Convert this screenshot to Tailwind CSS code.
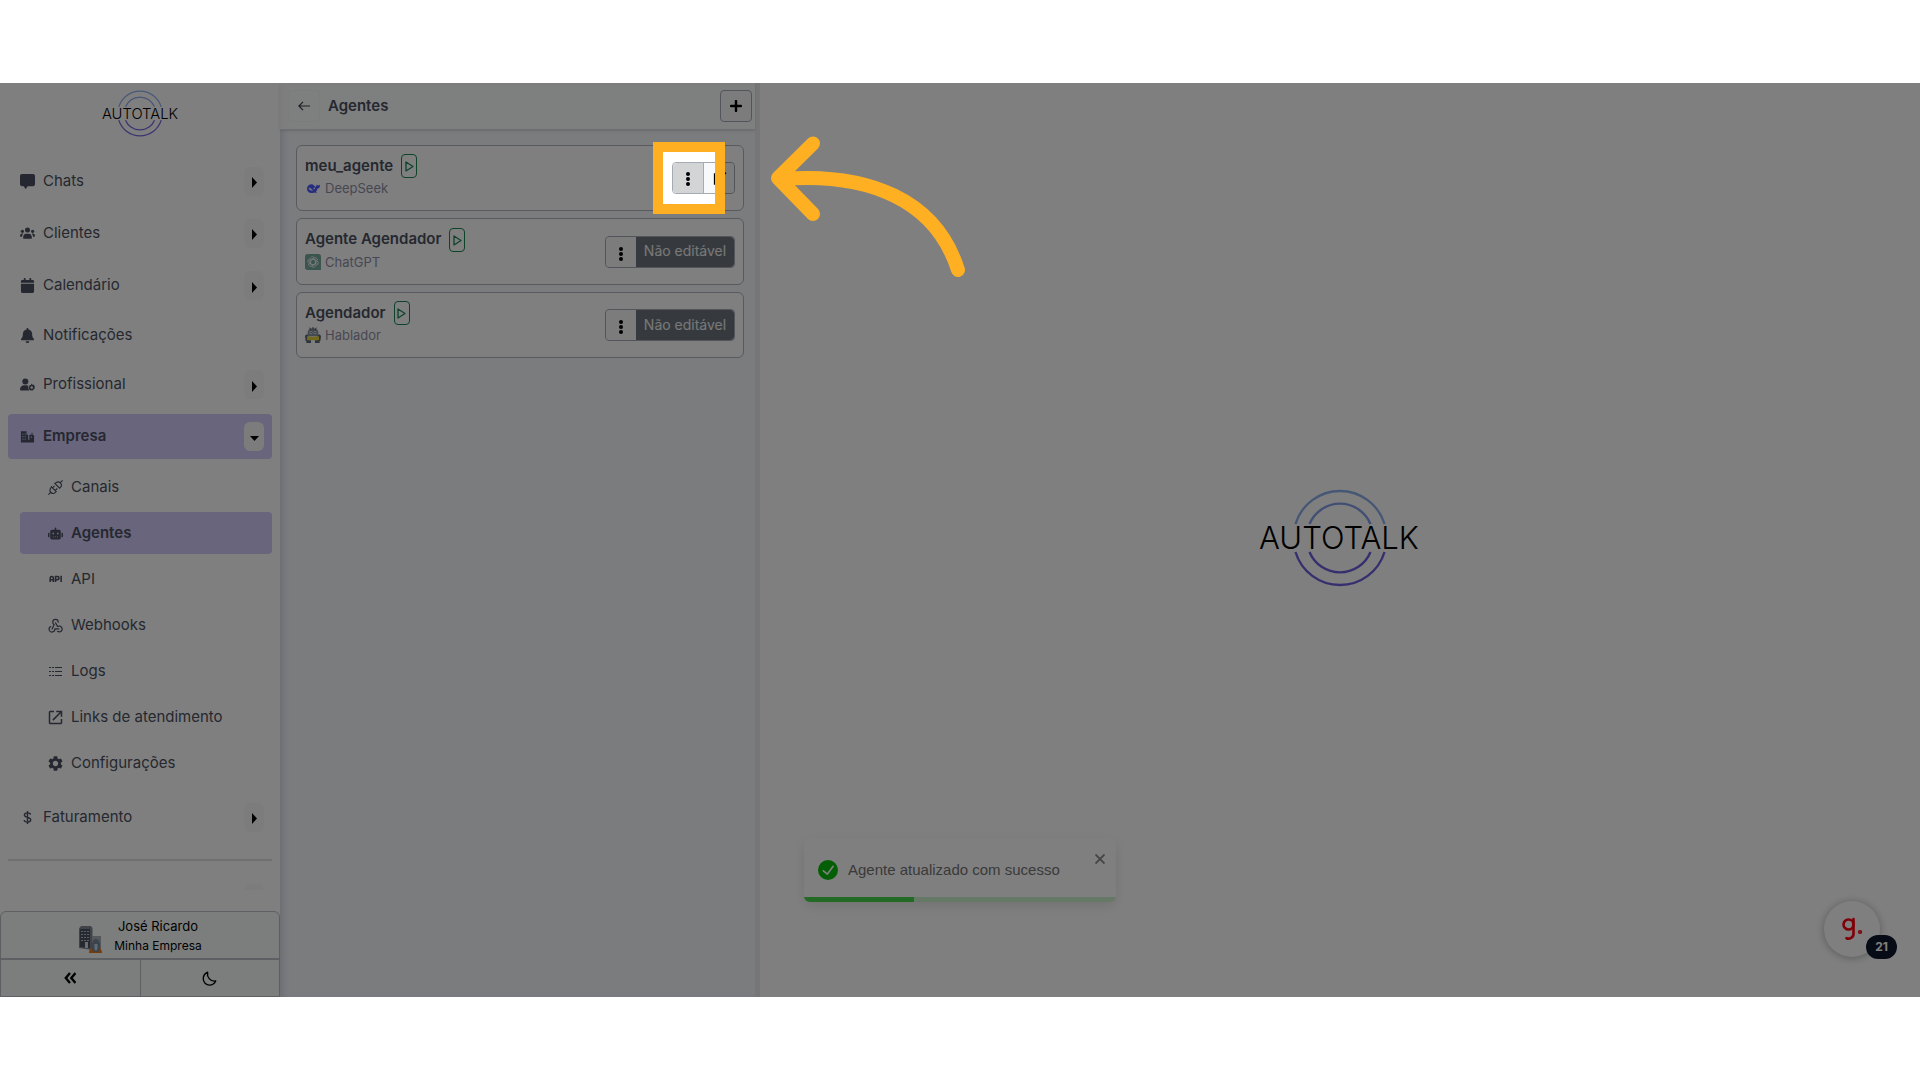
<!DOCTYPE html>
<html lang="pt-BR">
<head>
    <meta charset="UTF-8">
    <meta name="viewport" content="width=device-width, initial-scale=1.0">
    <title>Autotalk - Agentes</title>
    <script src="https://cdn.jsdelivr.net/npm/@tailwindcss/browser@4"></script>
</head>
<body class="bg-white font-['Inter','Roboto',sans-serif] text-[15px] text-[#4b5160]">
    <div class="h-screen py-[83px]">
        <div class="relative flex h-full overflow-hidden bg-white">

            <!-- Sidebar -->
            <aside class="flex w-[280px] shrink-0 flex-col bg-white shadow-[2px_0_6px_2px_#d9d9e6]">
                <a href="#" class="flex h-[76px] shrink-0 justify-center pt-1" aria-label="Autotalk">
                    <svg class="h-[53px] w-20" viewBox="0 0 168 110">
                        <g fill="none" stroke-width="2.6">
                            <path d="M39.500 41A46.500 46.500 0 0 1 128.500 41" stroke="#8fb0f0"/>
                            <path d="M53.500 41A33 33 0 0 1 114.500 41" stroke="#8fa8f0"/>
                            <path d="M39.500 69A46.500 46.500 0 0 0 128.500 69" stroke="#7466e0"/>
                            <path d="M53.500 69A33 33 0 0 0 114.500 69" stroke="#7466e0"/>
                        </g>
                        <text x="84" y="66" text-anchor="middle" class="fill-black font-['Inter'] text-[31px] font-light">AUTOTALK</text>
                    </svg>
                </a>

                <nav class="mb-[21px] flex min-h-0 flex-1 flex-col gap-[7px] overflow-hidden px-2">
                    <div class="flex h-[45px] shrink-0 items-center rounded pr-2 pl-3">
                        <a href="#" class="flex flex-1 items-center gap-2">
                            <svg class="size-[15px]" viewBox="0 0 512 512" fill="currentColor"><path d="M64 0C28.700 0 0 28.700 0 64V352c0 35.300 28.700 64 64 64h64l56 88c6 8 14 8 20 0L260 416H448c35.300 0 64-28.700 64-64V64c0-35.300-28.700-64-64-64H64z"/></svg>
                            Chats
                        </a>
                        <button class="flex h-[29px] w-5 items-center justify-center rounded-md bg-[#f8f9fa]" aria-label="Abrir Chats"><svg class="mt-0.5 h-[11px] w-[5px]" viewBox="0 0 5 10" preserveAspectRatio="none"><path d="M0 0l5 5-5 5z"/></svg></button>
                    </div>
                    <div class="flex h-[45px] shrink-0 items-center rounded pr-2 pl-3">
                        <a href="#" class="flex flex-1 items-center gap-2">
                            <svg class="size-[15px]" viewBox="0 0 24 24" fill="currentColor"><circle cx="12" cy="6.500" r="4"/><circle cx="3.800" cy="8.500" r="2.600"/><circle cx="20.200" cy="8.500" r="2.600"/><path d="M5 19c0-4 2-6.500 5-6.500h4c3 0 5 2.500 5 6.500 0 1-.5 1.500-1.500 1.500h-11C5.500 20.500 5 20 5 19zM0 16c0-2.500 1.500-4 3.500-4h1.700C4 13.500 3.300 15 3.200 17H1c-.6 0-1-.4-1-1zM24 16c0-2.500-1.500-4-3.500-4h-1.700c1.200 1.500 1.900 3 2 5H23c.6 0 1-.4 1-1z"/></svg>
                            Clientes
                        </a>
                        <button class="flex h-[29px] w-5 items-center justify-center rounded-md bg-[#f8f9fa]" aria-label="Abrir Clientes"><svg class="mt-0.5 h-[11px] w-[5px]" viewBox="0 0 5 10" preserveAspectRatio="none"><path d="M0 0l5 5-5 5z"/></svg></button>
                    </div>
                    <div class="flex h-[45px] shrink-0 items-center rounded pr-2 pl-3">
                        <a href="#" class="flex flex-1 items-center gap-2">
                            <svg class="size-[15px]" viewBox="0 0 448 512" fill="currentColor"><path d="M96 32V64H48C21.500 64 0 85.500 0 112v48H448V112c0-26.500-21.500-48-48-48H352V32c0-17.700-14.300-32-32-32s-32 14.300-32 32V64H160V32c0-17.700-14.300-32-32-32S96 14.300 96 32zM448 192H0V464c0 26.500 21.500 48 48 48H400c26.500 0 48-21.500 48-48V192z"/></svg>
                            Calendário
                        </a>
                        <button class="flex h-[29px] w-5 items-center justify-center rounded-md bg-[#f8f9fa]" aria-label="Abrir Calendário"><svg class="mt-1 h-[11px] w-[5px]" viewBox="0 0 5 10" preserveAspectRatio="none"><path d="M0 0l5 5-5 5z"/></svg></button>
                    </div>
                    <a href="#" class="flex h-10 shrink-0 items-center gap-2 rounded pl-3">
                        <svg class="size-[15px]" viewBox="0 0 448 512" fill="currentColor"><path d="M224 0c-17.700 0-32 14.300-32 32V51.200C119 66 64 130.600 64 208v18.800c0 47-17.300 92.400-48.500 127.600l-7.400 8.300c-8.400 9.400-10.400 22.900-5.300 34.400S19.400 416 32 416H416c12.600 0 24-7.400 29.200-18.900s3.100-25-5.300-34.400l-7.400-8.300C401.300 319.200 384 273.900 384 226.800V208c0-77.400-55-142-128-156.800V32c0-17.700-14.300-32-32-32zm45.300 493.300c12-12 18.700-28.300 18.700-45.300H160c0 17 6.700 33.300 18.700 45.300s28.300 18.700 45.300 18.700s33.300-6.700 45.300-18.700z"/></svg>
                        Notificações
                    </a>
                    <div class="flex h-[45px] shrink-0 items-center rounded pr-2 pl-3">
                        <a href="#" class="flex flex-1 items-center gap-2">
                            <svg class="size-[15px]" viewBox="0 0 24 24" fill="currentColor"><circle cx="8.500" cy="7" r="4.800"/><path d="M0 20c0-4.500 3-7 6.500-7h4c1 0 2 .3 2.800.7-.8 2.800-.3 5.500 1.700 7.800H1.500C.5 21.500 0 21 0 20z"/><path fill-rule="evenodd" d="M18.500 10.500l1.200 1.800 2-.4.900 1.700 1.400 1.500-1 1.700.6 2-1.800.9-.9 1.900-2.100-.3-1.700.8-1.300-1.700-1.900-.6.400-2-.8-1.900 1.600-1.300.5-1.900 2 .1zM18.700 14.800a2 2 0 1 0 .01 4 2 2 0 0 0 0-4z"/></svg>
                            Profissional
                        </a>
                        <button class="flex h-[29px] w-5 items-center justify-center rounded-md bg-[#f8f9fa]" aria-label="Abrir Profissional"><svg class="mt-1 h-[11px] w-[5px]" viewBox="0 0 5 10" preserveAspectRatio="none"><path d="M0 0l5 5-5 5z"/></svg></button>
                    </div>
                    <div class="flex h-[45px] shrink-0 items-center rounded bg-[#d0caf9] pr-2 pl-3">
                        <a href="#" class="flex flex-1 items-center gap-2 font-semibold">
                            <svg class="size-[15px]" viewBox="0 0 24 24" fill="currentColor" fill-rule="evenodd"><path d="M1.500 3.500h9V9H13v8h2V9h3.500V6H20v3l2.500 1v11.500h-21zM4 7v2h1.500V7zM7.500 7v2H9V7zM4 11v2h1.500v-2zM7.500 11v2H9v-2zM4 15v2h1.500v-2zM7.500 15v2H9v-2zM17.500 12v2H19v-2z"/></svg>
                            Empresa
                        </a>
                        <button class="flex h-[29px] w-5 items-center justify-center rounded-md bg-[#f8f9fa]" aria-label="Fechar Empresa"><svg class="mt-1 h-[5px] w-[9px]" viewBox="0 0 10 5" preserveAspectRatio="none"><path d="M0 0h10l-5 5z"/></svg></button>
                    </div>

                    <!-- Empresa submenu -->
                    <div class="ml-3 flex shrink-0 flex-col gap-1 pb-1">
                        <a href="#" class="flex h-[42px] items-center gap-2 rounded pl-7">
                            <svg class="size-[15px]" viewBox="1 1 22 22" fill="none" stroke="currentColor" stroke-width="1.700"><path d="M1.500 22.500l3.700-3.700M18.800 5.200l3.700-3.700M6 11l7 7-1.500 1.500c-1.800 1.600-4.300 1.400-6-.2-1.800-1.800-2-4.500-.5-6.500zM11 6l7 7 1.500-1.500c1.600-1.800 1.400-4.300-.2-6-1.800-1.800-4.500-2-6.500-.5zM7.500 12.500l3-3M11.500 16.500l3-3"/></svg>
                            Canais
                        </a>
                        <a href="#" class="flex h-[42px] items-center gap-2 rounded bg-[#d0caf9] pl-7 font-semibold">
                            <svg class="size-[15px]" viewBox="0 0 640 512" fill="currentColor" fill-rule="evenodd"><path d="M320 0c17.700 0 32 14.300 32 32V96H472c39.800 0 72 32.200 72 72V440c0 39.800-32.200 72-72 72H168c-39.800 0-72-32.200-72-72V168c0-39.800 32.200-72 72-72H288V32c0-17.700 14.300-32 32-32zM208 384v32h48v-32zM296 384v32h48v-32zM384 384v32h48v-32zM264 256a40 40 0 1 0-80 0 40 40 0 1 0 80 0zm152 40a40 40 0 1 0 0-80 40 40 0 1 0 0 80zM48 224H64V416H48c-26.500 0-48-21.500-48-48V272c0-26.500 21.500-48 48-48zm544 0c26.500 0 48 21.500 48 48v96c0 26.500-21.500 48-48 48H576V224h16z"/></svg>
                            Agentes
                        </a>
                        <a href="#" class="flex h-[42px] items-center gap-2 rounded pl-7">
                            <svg class="size-[15px]" viewBox="0 0 24 24" fill="none" stroke="currentColor" stroke-width="2.500"><path d="M3.500 16V9.500c0-3 5-3 5 0V16M3.500 12.500h5M12 16V7.200h3.500c2.700 0 2.700 5 0 5H12M21 6v10"/></svg>
                            API
                        </a>
                        <a href="#" class="flex h-[42px] items-center gap-2 rounded pl-7">
                            <svg class="size-[15px]" viewBox="1 1 22 22" fill="none" stroke="currentColor" stroke-width="1.800" stroke-linecap="round" stroke-linejoin="round"><path d="M4.900 13.600a4.200 4.200 0 1 0 6.100 3.400h6M15 20.500a4.200 4.200 0 1 0 2-7.500c-.7 0-1.400.2-2 .5L12 8M16 7a4 4 0 1 0-8 0c0 1.800.8 3.300 2 4L7 17"/></svg>
                            Webhooks
                        </a>
                        <a href="#" class="flex h-[42px] items-center gap-2 rounded pl-7">
                            <svg class="size-[15px]" viewBox="0 0 15 15" fill="none" stroke="currentColor" stroke-width="1"><path d="M1 3.500h2M4 3.500h2M7 3.500h7M1 7.500h2M4 7.500h2M7 7.500h7M1 11.500h2M4 11.500h2M7 11.500h7"/></svg>
                            Logs
                        </a>
                        <a href="#" class="flex h-[42px] items-center gap-2 rounded pl-7">
                            <svg class="size-[15px]" viewBox="2 2 20 20" fill="currentColor"><path d="M19 19H5V5h5V3H5a2 2 0 0 0-2 2v14a2 2 0 0 0 2 2h14c1.100 0 2-.9 2-2v-5h-2v5zM13 3v2h4.590l-9.830 9.830 1.410 1.410L19 6.410V11h2V3h-8z"/></svg>
                            Links de atendimento
                        </a>
                        <a href="#" class="flex h-[42px] items-center gap-2 rounded pl-7">
                            <svg class="size-[15px]" viewBox="2 2 20 20" fill="currentColor"><path d="M19.140 12.940c.04-.3.06-.61.06-.94 0-.32-.02-.64-.07-.94l2.030-1.580c.18-.14.23-.41.12-.61l-1.920-3.320c-.12-.22-.37-.29-.59-.22l-2.390.96c-.5-.38-1.030-.7-1.620-.94l-.36-2.540c-.04-.24-.24-.41-.48-.41h-3.840c-.24 0-.43.17-.47.41l-.36 2.540c-.59.24-1.130.57-1.620.94l-2.390-.96c-.22-.08-.47 0-.59.22L2.740 8.870c-.12.21-.08.47.12.61l2.030 1.580c-.05.3-.09.63-.09.94s.02.64.07.94l-2.030 1.580c-.18.14-.23.41-.12.61l1.920 3.320c.12.22.37.29.59.22l2.390-.96c.5.38 1.030.7 1.620.94l.36 2.540c.05.24.24.41.48.41h3.840c.24 0 .44-.17.47-.41l.36-2.540c.59-.24 1.130-.56 1.620-.94l2.390.96c.22.08.47 0 .59-.22l1.920-3.320c.12-.22.07-.47-.12-.61l-2.010-1.580zM12 15.600c-1.980 0-3.600-1.620-3.600-3.600s1.620-3.600 3.600-3.600 3.600 1.620 3.600 3.600-1.620 3.600-3.600 3.600z"/></svg>
                            Configurações
                        </a>
                    </div>

                    <div class="flex h-[45px] shrink-0 items-center rounded pr-2 pl-3">
                        <a href="#" class="flex flex-1 items-center gap-2">
                            <svg class="size-[15px]" viewBox="0 0 24 24" fill="none" stroke="currentColor" stroke-width="2.200"><path d="M12 1.500v21M17 7.500c-.5-2-2.500-3-5-3s-5 1.200-5 3.600c0 5 10.200 2.400 10.200 7.600 0 2.500-2.400 3.800-5.200 3.800s-5-1.200-5.400-3.500"/></svg>
                            Faturamento
                        </a>
                        <button class="flex h-[29px] w-5 items-center justify-center rounded-md bg-[#f8f9fa]" aria-label="Abrir Faturamento"><svg class="mt-0.5 h-[11px] w-[5px]" viewBox="0 0 5 10" preserveAspectRatio="none"><path d="M0 0l5 5-5 5z"/></svg></button>
                    </div>
                    <hr class="mt-3 shrink-0 border-t-2 border-[#dfe0e4]">
                    <div class="mt-4 mr-2 h-[29px] w-5 shrink-0 self-end rounded-md bg-[#f8f9fa]"></div>
                </nav>

                <!-- User -->
                <footer class="shrink-0 rounded-t-md border border-[#bcbec6] bg-[#f8fcfb] text-black">
                    <button class="flex h-12 w-full items-center justify-center gap-3 border-b-2 border-[#bcbec6]">
                        <svg class="mt-2 h-7 w-6" viewBox="0 0 24 28"><path d="M1 3.500L3 1h10l1.500 2v22L1 23z" fill="#808891"/><path d="M2 4h10v19L2 22z" fill="#4a5462"/><g stroke="#b9c0c8" stroke-width="1" stroke-dasharray="2 1"><path d="M3 6.500h8M3 9.500h8M3 12.500h8M3 15.500h8"/></g><path d="M7 17h3v6H7z" fill="#d8dade"/><path d="M14 11h9v14h-9z" fill="#a9b1ba"/><path d="M11 28c0-5 4-6 6.500-6s6.500 1 6.500 6z" fill="#f07818"/><path d="M14 20c0-8 8-8 8 0v4l-2 3h-4l-2-3z" fill="#77889b"/><path d="M16.500 19h3v5l-1.500 2-1.500-2z" fill="#c8d6e6"/></svg>
                        <span class="flex flex-col items-center pt-0.5 leading-5">
                            <span class="text-[13px]">José Ricardo</span>
                            <span class="text-[12px]">Minha Empresa</span>
                        </span>
                    </button>
                    <div class="flex h-9 divide-x divide-[#bcbec6]">
                        <button class="flex flex-1 items-center justify-center" aria-label="Recolher menu"><svg class="size-3" viewBox="0 0 12 12" fill="none" stroke="#000" stroke-width="2.400"><path d="M6 1L1.800 6 6 11M11.500 1L7.300 6l4.200 5"/></svg></button>
                        <button class="flex flex-1 items-center justify-center" aria-label="Modo escuro"><svg class="size-[15px]" viewBox="0 0 24 24" fill="none" stroke="#000" stroke-width="2.200" stroke-linejoin="round"><path d="M9 2C7.500 9 13 17.500 22 16 20 20.500 16 22.500 12 22.500 6.500 22.500 2 18 2 12.500 2 8 4.500 4 9 2z"/></svg></button>
                    </div>
                </footer>
            </aside>

            <!-- Agent list -->
            <section class="flex w-[480px] shrink-0 flex-col border-r-5 border-[#edecf2] bg-[#f5f8fd] shadow-[inset_6px_0_6px_-3px_#d9d9e6]">
                <header class="flex h-[47px] items-center border-b border-[#dcdde4] bg-white/80 pr-[3px] pl-2 shadow-sm">
                    <button class="flex size-8 items-center justify-center rounded border border-[#f8f8fa]" aria-label="Voltar"><svg class="h-[10px] w-3" viewBox="0 0 12 10" fill="none" stroke="#3c404a" stroke-width="1.200"><path d="M5 .8L.9 5 5 9.200M1 5h11"/></svg></button>
                    <h1 class="ml-2 flex-1 font-semibold">Agentes</h1>
                    <button class="flex size-8 items-center justify-center rounded border-1 border-[#a5abb2] bg-[#f8f9fa]" aria-label="Adicionar agente"><svg class="size-3" viewBox="0 0 12 12" stroke="#000" stroke-width="2.400" stroke-linecap="round"><path d="M6 1v10M1 6h10"/></svg></button>
                </header>

                <ul class="flex flex-col gap-[7px] py-[15px] pr-[11px] pl-4">
                    <li class="flex h-[66px] items-center justify-between rounded-md border border-[#b0b4be] bg-white pr-2 pl-2">
                        <div class="pb-1">
                            <div class="flex h-6 items-center gap-2">
                                <h2 class="font-semibold">meu_agente</h2>
                                <button class="flex h-6 w-4 items-center justify-center rounded border border-[#198754]" aria-label="Testar meu_agente"><svg class="mt-px h-[11px] w-[9px]" viewBox="0 0 9 11" fill="none" stroke="#198754" stroke-width="1.300" stroke-linejoin="round"><path d="M1 1l7 4.500L1 10z"/></svg></button>
                            </div>
                            <p class="flex items-center gap-1 text-[13px] leading-5 text-[#8f8fa8]">
                                <svg class="size-4" viewBox="0 0 24 24"><path d="M3 13C3 9 6 6.500 10 6.500c1.300 0 2.500.6 3.500 1.600l3 2.700c.2-1.800.5-3 1.500-4 .3 1 .9 1.500 2 1.500.9 0 1.600-.5 2.600-1.200.2 3.200-1.300 5.500-4 6.200-.5 1.900-1.200 3.200-2.200 4.200l1.600 1.200c-1.700.8-3 .6-4.300 0C9.500 21 3 18.500 3 13z" fill="#4d5bfe"/><path d="M5.500 12c2-1 4.500 1 6.500 4-3 .6-6.500-.7-6.500-4z" fill="#dfe3ff"/><circle cx="14" cy="12.500" r="1.200" fill="#fff"/></svg>
                                DeepSeek
                            </p>
                        </div>
                        <div class="flex h-8 rounded border border-[#a5abb2]">
                            <div class="relative flex">
                                <button class="flex w-[31px] items-center justify-center rounded-l border-r border-[#a5abb2] bg-[#d3d4d5]" aria-label="Opções"><svg class="mt-0.5 h-[14px] w-1" viewBox="0 0 4 14"><circle cx="2" cy="2" r="2"/><circle cx="2" cy="7" r="2"/><circle cx="2" cy="12" r="2"/></svg></button>
                                <!-- Spotlight: the spread shadow dims everything around the button -->
                                <div class="pointer-events-none absolute -top-[21px] -left-5 z-40 size-[72px] border-10 border-[#ffb022] shadow-[0_0_0_9999px_rgb(0_0_0/0.5)]"></div>
                                <svg class="pointer-events-none absolute -top-7 left-[98px] z-50 h-[146px] w-[196px]" viewBox="0 0 196 146" fill="none" stroke="#ffb022" stroke-width="14" stroke-linecap="round" stroke-linejoin="round"><path d="M42 8.500L7 43l35 36M10 44C98 37 165 65 187 135"/></svg>
                            </div>
                            <button class="flex w-[30px] items-center justify-center rounded-r bg-[#f8f9fa]" aria-label="Editar"><svg class="size-[15px]" viewBox="0 0 24 24" fill="none" stroke="#000" stroke-width="3"><path d="M14 5H4.500v15.500H19V12M10 14L22 2.500"/></svg></button>
                        </div>
                    </li>
                    <li class="flex h-[67px] items-center justify-between rounded-md border border-[#b0b4be] bg-white pr-2 pl-2">
                        <div class="pb-1">
                            <div class="flex h-6 items-center gap-2">
                                <h2 class="font-semibold">Agente Agendador</h2>
                                <button class="flex h-6 w-4 items-center justify-center rounded border border-[#198754]" aria-label="Testar Agente Agendador"><svg class="mt-px h-[11px] w-[9px]" viewBox="0 0 9 11" fill="none" stroke="#198754" stroke-width="1.300" stroke-linejoin="round"><path d="M1 1l7 4.500L1 10z"/></svg></button>
                            </div>
                            <p class="flex items-center gap-1 text-[13px] leading-5 text-[#8f8fa8]">
                                <svg class="size-4" viewBox="0 0 24 24"><path d="M4 0h16a4 4 0 0 1 4 4v20H4a4 4 0 0 1-4-4V4a4 4 0 0 1 4-4z" fill="#74aa9c"/><g fill="none" stroke="#fff" stroke-width="1.100"><path id="petal" d="M12 7.800l4.600 2.700v5.400a4 4 0 0 1-6 3.400"/><use href="#petal" transform="rotate(60 12 12)"/><use href="#petal" transform="rotate(120 12 12)"/><use href="#petal" transform="rotate(180 12 12)"/><use href="#petal" transform="rotate(240 12 12)"/><use href="#petal" transform="rotate(300 12 12)"/></g></svg>
                                ChatGPT
                            </p>
                        </div>
                        <div class="flex h-8 rounded border border-[#a5abb2]">
                            <button class="flex w-[30px] items-center justify-center rounded-l bg-[#f8f9fa]" aria-label="Opções"><svg class="mt-1 h-[14px] w-1" viewBox="0 0 4 14"><circle cx="2" cy="2" r="2"/><circle cx="2" cy="7" r="2"/><circle cx="2" cy="12" r="2"/></svg></button>
                            <button class="w-[98px] rounded-r bg-[#6c757d] pb-0.5 text-[14px] text-white/90" disabled>Não editável</button>
                        </div>
                    </li>
                    <li class="flex h-[66px] items-center justify-between rounded-md border border-[#b0b4be] bg-white pr-2 pl-2">
                        <div class="pb-1">
                            <div class="flex h-6 items-center gap-2">
                                <h2 class="font-semibold">Agendador</h2>
                                <button class="flex h-6 w-4 items-center justify-center rounded border border-[#198754]" aria-label="Testar Agendador"><svg class="mt-px h-[11px] w-[9px]" viewBox="0 0 9 11" fill="none" stroke="#198754" stroke-width="1.300" stroke-linejoin="round"><path d="M1 1l7 4.500L1 10z"/></svg></button>
                            </div>
                            <p class="flex items-center gap-1 text-[13px] leading-5 text-[#8f8fa8]">
                                <svg class="size-4" viewBox="0 0 24 24"><path d="M4 8c0-8 16-8 16 0v6H4z" fill="#8a93a3"/><path d="M7 1l2 4M12 0v4M17 1l-2 4" stroke="#4c5360" stroke-width="1.500"/><circle cx="9" cy="8.500" r="2.200" fill="#e8eaf0"/><circle cx="15" cy="8.500" r="2.200" fill="#e8eaf0"/><circle cx="9" cy="8.500" r="1" fill="#333"/><circle cx="15" cy="8.500" r="1" fill="#333"/><path d="M0 14c1-4 5-3 5 0v7H1zM24 14c-1-4-5-3-5 0v7h4z" fill="#5d6678"/><path d="M3 14l9 1 9-1v6H3z" fill="#e6d335"/><path d="M2 20h7v4H2zM15 20h7v4h-7z" fill="#5d6678"/></svg>
                                Hablador
                            </p>
                        </div>
                        <div class="flex h-8 rounded border border-[#a5abb2]">
                            <button class="flex w-[30px] items-center justify-center rounded-l bg-[#f8f9fa]" aria-label="Opções"><svg class="mt-1 h-[14px] w-1" viewBox="0 0 4 14"><circle cx="2" cy="2" r="2"/><circle cx="2" cy="7" r="2"/><circle cx="2" cy="12" r="2"/></svg></button>
                            <button class="w-[98px] rounded-r bg-[#6c757d] pb-0.5 text-[14px] text-white/90" disabled>Não editável</button>
                        </div>
                    </li>
                </ul>
            </section>

            <!-- Empty state -->
            <main class="flex min-w-0 flex-1 items-center justify-center pb-1">
                <svg class="h-[110px] w-[168px]" viewBox="0 0 168 110" role="img" aria-label="Autotalk">
                    <g fill="none" stroke-width="2.400">
                        <path d="M39.500 41A46.500 46.500 0 0 1 128.500 41" stroke="#8caeea"/>
                        <path d="M53.500 41A33 33 0 0 1 114.500 41" stroke="#859ee8"/>
                        <path d="M39.500 69A46.500 46.500 0 0 0 128.500 69" stroke="#6c5fdd"/>
                        <path d="M53.500 69A33 33 0 0 0 114.500 69" stroke="#6c5fdd"/>
                    </g>
                    <text x="83" y="66" text-anchor="middle" class="fill-black font-['Inter'] text-[31px] font-light">AUTOTALK</text>
                </svg>
            </main>

            <!-- Toast -->
            <div role="alert" class="absolute bottom-[95px] left-1/2 flex h-16 w-[312px] -translate-x-1/2 items-center gap-[10px] overflow-hidden rounded-md bg-white px-[14px] font-['Liberation_Sans',sans-serif] text-[#757575] shadow-[0_4px_12px_rgb(0_0_0/0.1)]">
                <svg class="size-5 shrink-0" viewBox="0 0 24 24"><path fill="#07bc0c" d="M12 0a12 12 0 1 0 12 12A12.014 12.014 0 0 0 12 0zm6.927 8.200l-6.845 9.289a1.011 1.011 0 0 1-1.430.188l-4.888-3.908a1 1 0 1 1 1.250-1.562l4.076 3.261 6.227-8.451a1 1 0 1 1 1.610 1.183z"/></svg>
                <span class="flex-1">Agente atualizado com sucesso</span>
                <button class="mt-4 mr-[-3px] self-start" aria-label="Fechar"><svg class="size-[10px]" viewBox="0 0 10 10" stroke="#8a8a8a" stroke-width="1.900"><path d="M.5.5l9 9M9.500.5l-9 9"/></svg></button>
                <div class="absolute inset-x-0 bottom-0 h-[5px] bg-[#cdf2ce]"><div class="h-full bg-[#46d549]" style="width: 35.3%"></div></div>
            </div>

            <!-- Help widget -->
            <button class="absolute right-10 bottom-10 size-14 rounded-full bg-white shadow-[0_1px_8px_rgb(0_0_0/0.3)]" aria-label="Ajuda">
                <svg class="mx-auto h-6 w-5" viewBox="0 0 20 24" fill="none" stroke="#ff0010" stroke-width="2.600" stroke-linecap="round"><circle cx="6.500" cy="7.500" r="5"/><path d="M11.500 2v15c0 3.500-4 5.500-7 4.200"/><circle cx="18" cy="15" r=".8"/></svg>
                <span class="absolute top-[34px] left-[42px] flex h-6 w-[31px] items-center justify-center rounded-full bg-[#0f172a] text-[12px] font-bold text-white">21</span>
            </button>
        </div>
    </div>
</body>
</html>
